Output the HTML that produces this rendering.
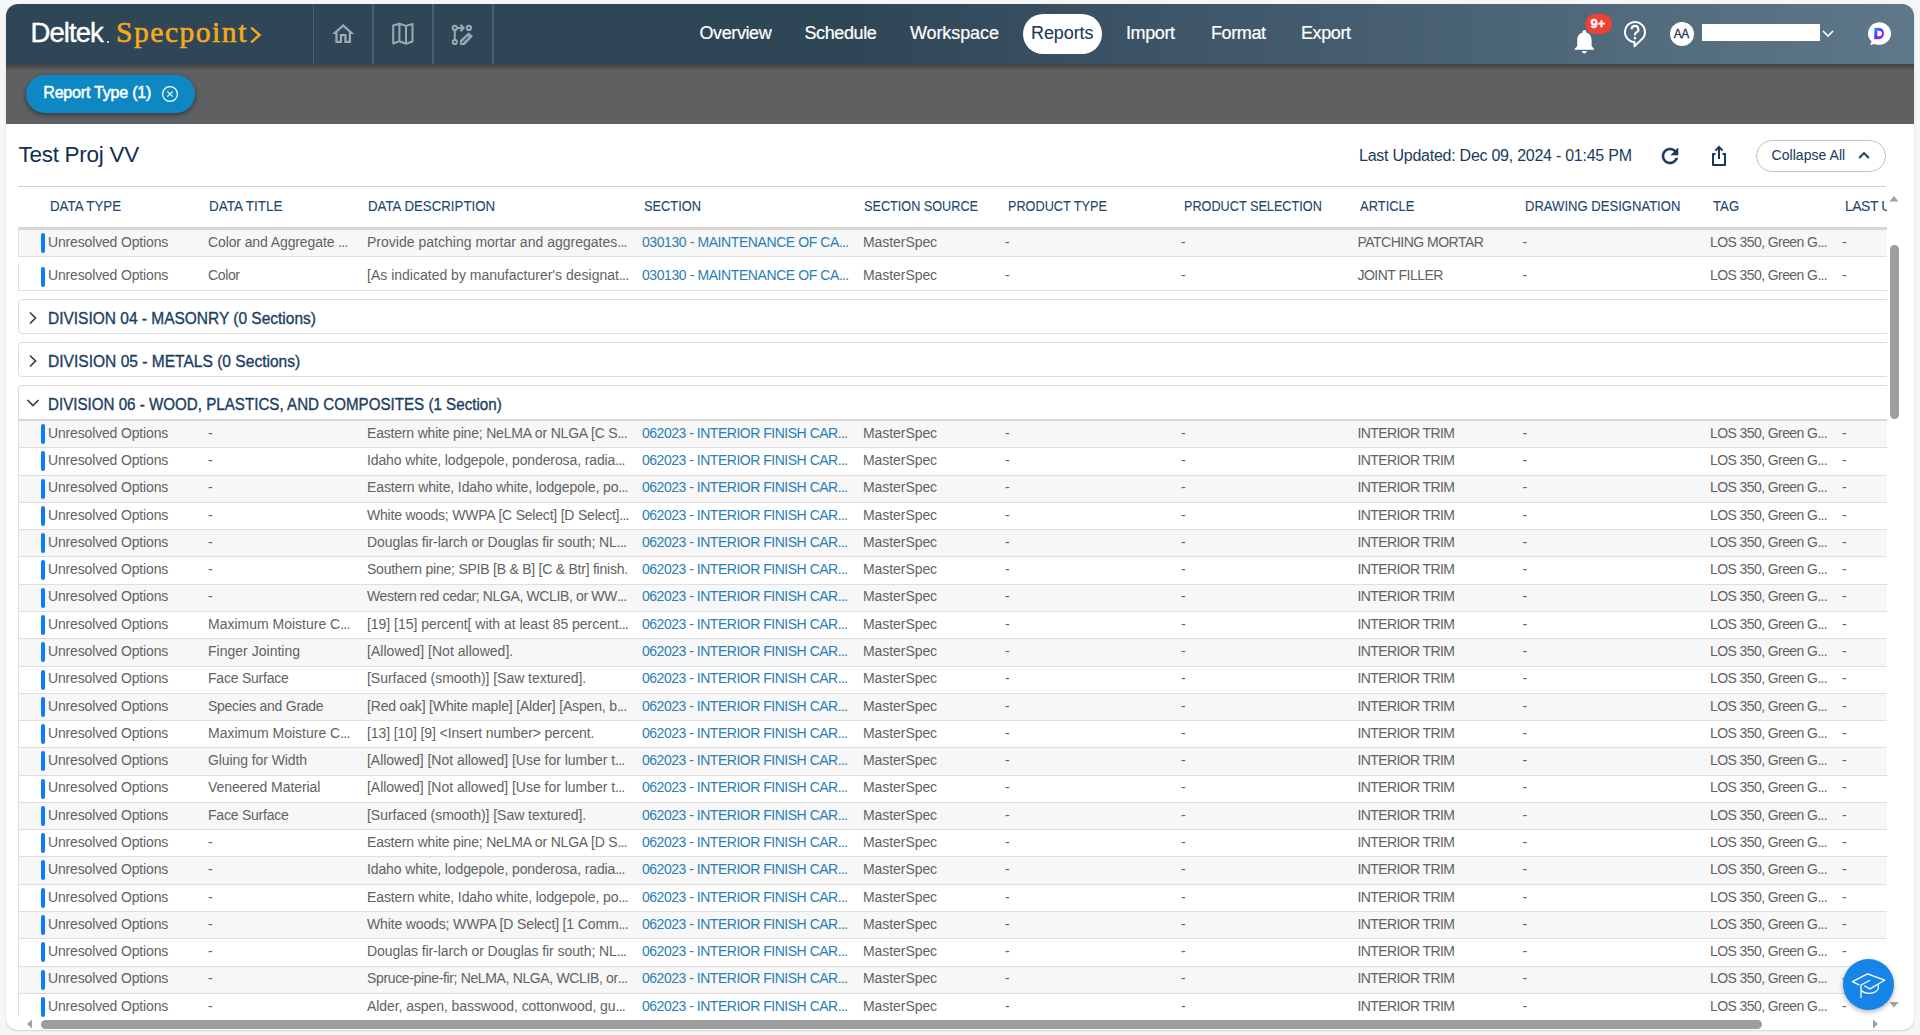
<!DOCTYPE html>
<html><head><meta charset="utf-8"><title>Reports</title>
<style>
html,body{margin:0;padding:0}
body{width:1920px;height:1035px;overflow:hidden;background:#f6f6f6;position:relative;font-family:"Liberation Sans",sans-serif}
.abs{position:absolute}
.t{position:absolute;white-space:nowrap;line-height:1}
#card{position:absolute;left:6px;top:4px;width:1908px;height:1026px;background:#fff;border-radius:12px;box-shadow:0 1px 2px rgba(0,0,0,.13),0 0 1px rgba(0,0,0,.12)}
#hdr{position:absolute;left:6px;top:4px;width:1908px;height:60px;border-radius:12px 12px 0 0;background:linear-gradient(90deg,#2e4656 0px,#2f4657 850px,#5e788a 1908px)}
.sep{position:absolute;top:4px;height:60px;width:1.5px;background:#4a5f70}
#band{position:absolute;left:6px;top:64px;width:1908px;height:60px;background:#5f6062}
#band:before{content:"";position:absolute;left:0;top:0;right:0;height:7px;background:linear-gradient(#3f4042,rgba(95,96,98,0))}
.nav{font-size:18px;color:#fff;-webkit-text-stroke:0.2px #fff}
#pill{position:absolute;left:1023px;top:14px;width:79px;height:40px;border-radius:20px;background:#fff}
#chip{position:absolute;left:26px;top:75px;width:169px;height:38px;border-radius:19px;background:#0e88c2;box-shadow:0 2px 5px rgba(0,0,0,.45)}
.hd{font-size:14px;color:#22466c;-webkit-text-stroke:0.1px #22466c}
.row{position:absolute;left:18px;width:1869px;border-bottom:1px solid #dedede;box-sizing:border-box;border-left:1px solid #dedede;background:#fff}
.row.g{background:#f7f7f7}
.row .bar{position:absolute;left:22px;top:3px;width:4px;height:20px;border-radius:2px;background:#0a7cfc}
.row .c{position:absolute;top:4.75px;font-size:14px;line-height:1;white-space:nowrap;color:#626262;letter-spacing:0px}
.row.r2{border-left-color:transparent}
.row.r2:before{content:'';position:absolute;left:-1px;top:6px;bottom:-1px;width:1px;background:#dedede}
.row.r2 .bar{top:9.8px}
.row.r2 .c{top:11px}
.c1{left:29px}.c2{left:189px}.c3{left:348px}.c4{left:623px}.c5{left:844px}.c6{left:986px}.c7{left:1162px}.c8{left:1338.5px}.c9{left:1503.5px}.c10{left:1691px}.c11{left:1823px}
.row .lk{color:#2a7eb4;letter-spacing:-0.45px}
.row .up{letter-spacing:-0.5px}
.row .c5{letter-spacing:-0.1px}
.row .c10{letter-spacing:-0.25px}
.div{position:absolute;left:18px;width:1890px;height:35px;border:1px solid #dcdcdc;border-radius:4px;box-sizing:border-box;background:#fff}
.dt{font-size:16px;color:#1c3e62;-webkit-text-stroke:0.35px #1c3e62}
.el{font-weight:normal;letter-spacing:-0.75px}

</style></head><body>
<div id="card"></div>
<div id="hdr"></div>
<div class="sep" style="left:312.6px"></div>
<div class="sep" style="left:372.4px"></div>
<div class="sep" style="left:432.4px"></div>
<div class="sep" style="left:492.2px"></div>
<!-- logo -->
<div class="t" style="left:30.6px;top:19.3px;font-size:27.5px;color:#fff;letter-spacing:-0.95px;-webkit-text-stroke:0.4px #fff">Deltek</div>
<div class="abs" style="left:107px;top:40.5px;width:2px;height:2px;background:#c9ced3"></div>
<div class="t" style="left:116px;top:17.7px;font-family:'Liberation Serif',serif;font-size:29.6px;color:#f5a91b;letter-spacing:1.5px;-webkit-text-stroke:0.6px #f5a91b">Specpoint</div>
<svg class="abs" style="left:246.8px;top:24px" width="16" height="20" viewBox="0 0 16 20"><path d="M4.2 3.6 L12.6 11 L4.2 18.4" fill="none" stroke="#f5a91b" stroke-width="2.5"/></svg>
<!-- nav icons -->
<svg class="abs" style="left:331.6px;top:23.6px" width="22.4" height="19.04" viewBox="2 3 20 17"><path d="M12 5.69l5 4.5V18h-2v-6H9v6H7v-7.81l5-4.5M12 3L2 12h3v8h6v-6h2v6h6v-8h3L12 3z" fill="#9aa9b4"/></svg>
<svg class="abs" style="left:385px;top:18px" width="40" height="32" viewBox="385 18 40 32"><path d="M393.2 25.4 L399.4 23.7 L406 25.9 L412.5 23.9 L412.5 41.5 L406 43.7 L399.4 41.3 L393.2 43.5 Z M399.4 23.7 V41.3 M406 25.9 V43.7" fill="none" stroke="#9aa9b4" stroke-width="2" stroke-linejoin="round"/></svg>
<svg class="abs" style="left:445px;top:18px" width="35" height="32" viewBox="445 18 35 32"><g fill="none" stroke="#9aa9b4" stroke-width="2"><circle cx="454.8" cy="27.9" r="2.1"/><circle cx="454.8" cy="42" r="2.1"/><path d="M454.8 30 V39.9"/><path d="M456.9 27.9 H463.5 M460.4 24.6 L463.7 27.9 L460.4 31.2"/><circle cx="468.9" cy="27.9" r="2.1"/></g><path d="M460 45 L460 40.3 L468.7 32.4 L472.9 36.3 L464.5 45 Z" fill="#9aa9b4"/><path d="M462.2 42.6 L467.9 37" stroke="#2f4557" stroke-width="1.3" stroke-linecap="round"/></svg>
<!-- nav text -->
<div class="t nav" style="left:699.5px;top:24.1px;letter-spacing:-0.4px">Overview</div>
<div class="t nav" style="left:804.5px;top:24.1px;letter-spacing:-0.4px">Schedule</div>
<div class="t nav" style="left:910px;top:24.1px;letter-spacing:-0.1px">Workspace</div>
<div id="pill"></div>
<div class="t nav" style="left:1031px;top:24.1px;color:#22395a;letter-spacing:-0.1px;-webkit-text-stroke:0.1px #22395a">Reports</div>
<div class="t nav" style="left:1126px;top:24.1px;letter-spacing:-0.4px">Import</div>
<div class="t nav" style="left:1211px;top:24.1px;letter-spacing:-0.4px">Format</div>
<div class="t nav" style="left:1301px;top:24.1px;letter-spacing:-0.4px">Export</div>
<!-- right icons -->
<svg class="abs" style="left:1570.2px;top:26.8px" width="28.8" height="28.8" viewBox="0 0 24 24"><path d="M12 22c1.1 0 2-.9 2-2h-4c0 1.1.89 2 2 2zm6-6v-5c0-3.07-1.64-5.64-4.5-6.32V4c0-.83-.67-1.5-1.5-1.5s-1.5.67-1.5 1.5v.68C7.63 5.36 6 7.92 6 11v5l-2 2v1h16v-1l-2-2z" fill="#fff"/></svg>
<div class="abs" style="left:1585px;top:14px;width:27px;height:20px;border-radius:10px;background:#ef4237"></div>
<div class="t" style="left:1590.5px;top:17px;font-size:13px;font-weight:bold;color:#fff;letter-spacing:0px;-webkit-text-stroke:0.3px #fff">9+</div>
<svg class="abs" style="left:1622px;top:19px" width="27" height="30" viewBox="0 0 27 30"><path d="M12.5 23 L12.5 27.2 L20.7 19.4 A10 10 0 1 0 12.5 23 Z" fill="none" stroke="#fff" stroke-width="2" stroke-linejoin="round"/><path d="M9.6 10.2 A3.4 3.4 0 1 1 14.3 13.4 C13.2 14 12.9 14.6 12.9 16.4" fill="none" stroke="#fff" stroke-width="2.1"/><rect x="11.8" y="18" width="2.3" height="2.3" fill="#fff"/></svg>
<div class="abs" style="left:1670px;top:22px;width:24px;height:24px;border-radius:12px;background:#fff"></div>
<div class="t" style="left:1673.8px;top:28px;font-size:12px;color:#1f3550;letter-spacing:-0.5px;-webkit-text-stroke:0.3px #1f3550">AA</div>
<div class="abs" style="left:1702px;top:24px;width:118px;height:17px;background:#fff"></div>
<svg class="abs" style="left:1821px;top:28px" width="14" height="12" viewBox="0 0 14 12"><path d="M2 3 L7 8 L12 3" fill="none" stroke="#fff" stroke-width="1.6"/></svg>
<svg class="abs" style="left:1865px;top:20px" width="28" height="28" viewBox="0 0 28 28"><defs><linearGradient id="dg" x1="0" y1="0" x2="1" y2="1"><stop offset="0" stop-color="#18b0ff"/><stop offset="0.45" stop-color="#5a30f8"/><stop offset="1" stop-color="#b41cf8"/></linearGradient></defs><path d="M14 2.2 A11.8 11.3 0 1 1 9.6 23.9 L5 25 L6.6 21.5 A11.8 11.3 0 0 1 14 2.2 Z" fill="#fff"/><path d="M9.3 7.8 H14.2 A5.8 5.8 0 0 1 14.2 19.2 H9.3 Z M12.3 10.7 V16.3 H14.2 A2.8 2.8 0 0 0 14.2 10.7 Z" fill="url(#dg)"/></svg>
<!-- band -->
<div id="band"></div>
<div id="chip"></div>
<div class="t" style="left:43.3px;top:85.1px;font-size:16px;color:#fff;letter-spacing:-0.2px;-webkit-text-stroke:0.5px #fff">Report Type (1)</div>
<svg class="abs" style="left:161px;top:85px" width="18" height="18" viewBox="0 0 18 18"><circle cx="9" cy="9" r="7.4" fill="none" stroke="#fff" stroke-width="1.2"/><path d="M6.3 6.3 L11.7 11.7 M11.7 6.3 L6.3 11.7" stroke="#fff" stroke-width="1.2"/></svg>
<!-- title bar -->
<div class="t" style="left:18.5px;top:144.4px;font-size:22.5px;color:#10304f;letter-spacing:-0.28px">Test Proj VV</div>
<div class="t" style="left:1359px;top:147.6px;font-size:16px;color:#1a3a5c;letter-spacing:-0.25px">Last Updated: Dec 09, 2024 - 01:45 PM</div>
<svg class="abs" style="left:1658px;top:144px" width="24" height="24" viewBox="0 0 24 24"><path d="M17.65 6.35C16.2 4.9 14.21 4 12 4c-4.42 0-7.99 3.58-7.99 8s3.57 8 7.99 8c3.73 0 6.84-2.55 7.73-6h-2.08c-.82 2.33-3.04 4-5.65 4-3.31 0-6-2.69-6-6s2.69-6 6-6c1.66 0 3.14.69 4.22 1.78L13 11h7V4l-2.35 2.35z" fill="#17385a" stroke="#17385a" stroke-width="0.6"/></svg>
<svg class="abs" style="left:1709px;top:145px" width="20" height="22" viewBox="0 0 20 22"><path d="M6.5 9 H4 V20 H16 V9 H13.5" fill="none" stroke="#17385a" stroke-width="2" stroke-linejoin="round"/><path d="M10 14 V3 M6.4 5.6 L10 2 L13.6 5.6" fill="none" stroke="#17385a" stroke-width="2"/></svg>
<div class="abs" style="left:1756px;top:140px;width:130px;height:32px;box-sizing:border-box;border:1px solid #c4c4c4;border-radius:16px"></div>
<div class="t" style="left:1771.5px;top:147.9px;font-size:14px;color:#17385a;letter-spacing:0.05px">Collapse All</div>
<svg class="abs" style="left:1857px;top:150px" width="14" height="10" viewBox="0 0 14 10"><path d="M2.2 8 L7 3.2 L11.8 8" fill="none" stroke="#17385a" stroke-width="1.9"/></svg>
<!-- table header -->
<div class="abs" style="left:18px;top:186px;width:1868px;height:1px;background:#d0d0d0"></div>
<div id="ch1" class="t hd" style="left:49.5px;top:199px;transform:scaleX(0.9517);transform-origin:0 0;">DATA TYPE</div>
<div id="ch2" class="t hd" style="left:209px;top:199px;transform:scaleX(0.9632);transform-origin:0 0;">DATA TITLE</div>
<div id="ch3" class="t hd" style="left:368px;top:199px;transform:scaleX(0.9481);transform-origin:0 0;">DATA DESCRIPTION</div>
<div id="ch4" class="t hd" style="left:644px;top:199px;transform:scaleX(0.9162);transform-origin:0 0;">SECTION</div>
<div id="ch5" class="t hd" style="left:864px;top:199px;transform:scaleX(0.9048);transform-origin:0 0;">SECTION SOURCE</div>
<div id="ch6" class="t hd" style="left:1007.5px;top:199px;transform:scaleX(0.9055);transform-origin:0 0;">PRODUCT TYPE</div>
<div id="ch7" class="t hd" style="left:1184px;top:199px;transform:scaleX(0.9052);transform-origin:0 0;">PRODUCT SELECTION</div>
<div id="ch8" class="t hd" style="left:1360px;top:199px;transform:scaleX(0.9238);transform-origin:0 0;">ARTICLE</div>
<div id="ch9" class="t hd" style="left:1525px;top:199px;transform:scaleX(0.9333);transform-origin:0 0;">DRAWING DESIGNATION</div>
<div id="ch10" class="t hd" style="left:1712.5px;top:199px;transform:scaleX(0.9424);transform-origin:0 0;">TAG</div>
<div class="abs" style="left:1845px;top:199px;width:42px;height:16px;overflow:hidden"><div class="t hd" style="left:0;top:0;letter-spacing:-0.5px">LAST UPDATED</div></div>
<!-- rows area -->
<div class="abs" style="left:0;top:187px;width:1887px;height:830px;overflow:hidden">
<div class="abs" style="left:0;top:-187px;width:1887px;height:1035px">
<div class="row g" style="top:230px;height:27px"><i class="bar"></i><span id="ca_1" class="c c1" style="letter-spacing:-0.156px">Unresolved Options</span><span id="ca_2" class="c c2" style="letter-spacing:-0.109px">Color and Aggregate <b class="el">...</b></span><span id="ca_3" class="c c3" style="letter-spacing:0.013px">Provide patching mortar and aggregates<b class="el">...</b></span><span id="ca_4" class="c c4 lk" style="letter-spacing:-0.414px">030130 - MAINTENANCE OF CA<b class="el">...</b></span><span id="ca_5" class="c c5" style="letter-spacing:-0.064px">MasterSpec</span><span id="ca_6" class="c c6">-</span><span id="ca_7" class="c c7">-</span><span id="ca_8" class="c c8 up" style="letter-spacing:-0.515px">PATCHING MORTAR</span><span id="ca_9" class="c c9">-</span><span id="ca_10" class="c c10" style="letter-spacing:-0.584px">LOS 350, Green G<b class="el">...</b></span><span id="ca_11" class="c c11">-</span></div>
<div class="row r2" style="top:257px;height:34px"><i class="bar"></i><span id="cb_1" class="c c1" style="letter-spacing:-0.156px">Unresolved Options</span><span id="cb_2" class="c c2" style="letter-spacing:-0.375px">Color</span><span id="cb_3" class="c c3" style="letter-spacing:0.005px">[As indicated by manufacturer's designat<b class="el">...</b></span><span id="cb_4" class="c c4 lk" style="letter-spacing:-0.414px">030130 - MAINTENANCE OF CA<b class="el">...</b></span><span id="cb_5" class="c c5" style="letter-spacing:-0.064px">MasterSpec</span><span id="cb_6" class="c c6">-</span><span id="cb_7" class="c c7">-</span><span id="cb_8" class="c c8 up" style="letter-spacing:-0.510px">JOINT FILLER</span><span id="cb_9" class="c c9">-</span><span id="cb_10" class="c c10" style="letter-spacing:-0.584px">LOS 350, Green G<b class="el">...</b></span><span id="cb_11" class="c c11">-</span></div>
<div class="row g d6" style="top:421.0px;height:27.28px"><i class="bar"></i><span id="c0_1" class="c c1" style="letter-spacing:-0.156px">Unresolved Options</span><span id="c0_2" class="c c2">-</span><span id="c0_3" class="c c3" style="letter-spacing:-0.188px">Eastern white pine; NeLMA or NLGA [C S<b class="el">...</b></span><span id="c0_4" class="c c4 lk" style="letter-spacing:-0.483px">062023 - INTERIOR FINISH CAR<b class="el">...</b></span><span id="c0_5" class="c c5" style="letter-spacing:-0.064px">MasterSpec</span><span id="c0_6" class="c c6">-</span><span id="c0_7" class="c c7">-</span><span id="c0_8" class="c c8 up" style="letter-spacing:-0.608px">INTERIOR TRIM</span><span id="c0_9" class="c c9">-</span><span id="c0_10" class="c c10" style="letter-spacing:-0.584px">LOS 350, Green G<b class="el">...</b></span><span id="c0_11" class="c c11">-</span></div>
<div class="row d6" style="top:448.28px;height:27.28px"><i class="bar"></i><span id="c1_1" class="c c1" style="letter-spacing:-0.156px">Unresolved Options</span><span id="c1_2" class="c c2">-</span><span id="c1_3" class="c c3" style="letter-spacing:-0.119px">Idaho white, lodgepole, ponderosa, radia<b class="el">...</b></span><span id="c1_4" class="c c4 lk" style="letter-spacing:-0.483px">062023 - INTERIOR FINISH CAR<b class="el">...</b></span><span id="c1_5" class="c c5" style="letter-spacing:-0.064px">MasterSpec</span><span id="c1_6" class="c c6">-</span><span id="c1_7" class="c c7">-</span><span id="c1_8" class="c c8 up" style="letter-spacing:-0.608px">INTERIOR TRIM</span><span id="c1_9" class="c c9">-</span><span id="c1_10" class="c c10" style="letter-spacing:-0.584px">LOS 350, Green G<b class="el">...</b></span><span id="c1_11" class="c c11">-</span></div>
<div class="row g d6" style="top:475.56px;height:27.28px"><i class="bar"></i><span id="c2_1" class="c c1" style="letter-spacing:-0.156px">Unresolved Options</span><span id="c2_2" class="c c2">-</span><span id="c2_3" class="c c3" style="letter-spacing:-0.116px">Eastern white, Idaho white, lodgepole, po<b class="el">...</b></span><span id="c2_4" class="c c4 lk" style="letter-spacing:-0.483px">062023 - INTERIOR FINISH CAR<b class="el">...</b></span><span id="c2_5" class="c c5" style="letter-spacing:-0.064px">MasterSpec</span><span id="c2_6" class="c c6">-</span><span id="c2_7" class="c c7">-</span><span id="c2_8" class="c c8 up" style="letter-spacing:-0.608px">INTERIOR TRIM</span><span id="c2_9" class="c c9">-</span><span id="c2_10" class="c c10" style="letter-spacing:-0.584px">LOS 350, Green G<b class="el">...</b></span><span id="c2_11" class="c c11">-</span></div>
<div class="row d6" style="top:502.84px;height:27.28px"><i class="bar"></i><span id="c3_1" class="c c1" style="letter-spacing:-0.156px">Unresolved Options</span><span id="c3_2" class="c c2">-</span><span id="c3_3" class="c c3" style="letter-spacing:-0.207px">White woods; WWPA [C Select] [D Select]<b class="el">...</b></span><span id="c3_4" class="c c4 lk" style="letter-spacing:-0.483px">062023 - INTERIOR FINISH CAR<b class="el">...</b></span><span id="c3_5" class="c c5" style="letter-spacing:-0.064px">MasterSpec</span><span id="c3_6" class="c c6">-</span><span id="c3_7" class="c c7">-</span><span id="c3_8" class="c c8 up" style="letter-spacing:-0.608px">INTERIOR TRIM</span><span id="c3_9" class="c c9">-</span><span id="c3_10" class="c c10" style="letter-spacing:-0.584px">LOS 350, Green G<b class="el">...</b></span><span id="c3_11" class="c c11">-</span></div>
<div class="row g d6" style="top:530.12px;height:27.28px"><i class="bar"></i><span id="c4_1" class="c c1" style="letter-spacing:-0.156px">Unresolved Options</span><span id="c4_2" class="c c2">-</span><span id="c4_3" class="c c3" style="letter-spacing:-0.074px">Douglas fir-larch or Douglas fir south; NL<b class="el">...</b></span><span id="c4_4" class="c c4 lk" style="letter-spacing:-0.483px">062023 - INTERIOR FINISH CAR<b class="el">...</b></span><span id="c4_5" class="c c5" style="letter-spacing:-0.064px">MasterSpec</span><span id="c4_6" class="c c6">-</span><span id="c4_7" class="c c7">-</span><span id="c4_8" class="c c8 up" style="letter-spacing:-0.608px">INTERIOR TRIM</span><span id="c4_9" class="c c9">-</span><span id="c4_10" class="c c10" style="letter-spacing:-0.584px">LOS 350, Green G<b class="el">...</b></span><span id="c4_11" class="c c11">-</span></div>
<div class="row d6" style="top:557.4px;height:27.28px"><i class="bar"></i><span id="c5_1" class="c c1" style="letter-spacing:-0.156px">Unresolved Options</span><span id="c5_2" class="c c2">-</span><span id="c5_3" class="c c3" style="letter-spacing:-0.238px">Southern pine; SPIB [B &amp; B] [C &amp; Btr] finish.</span><span id="c5_4" class="c c4 lk" style="letter-spacing:-0.483px">062023 - INTERIOR FINISH CAR<b class="el">...</b></span><span id="c5_5" class="c c5" style="letter-spacing:-0.064px">MasterSpec</span><span id="c5_6" class="c c6">-</span><span id="c5_7" class="c c7">-</span><span id="c5_8" class="c c8 up" style="letter-spacing:-0.608px">INTERIOR TRIM</span><span id="c5_9" class="c c9">-</span><span id="c5_10" class="c c10" style="letter-spacing:-0.584px">LOS 350, Green G<b class="el">...</b></span><span id="c5_11" class="c c11">-</span></div>
<div class="row g d6" style="top:584.68px;height:27.28px"><i class="bar"></i><span id="c6_1" class="c c1" style="letter-spacing:-0.156px">Unresolved Options</span><span id="c6_2" class="c c2">-</span><span id="c6_3" class="c c3" style="letter-spacing:-0.365px">Western red cedar; NLGA, WCLIB, or WW<b class="el">...</b></span><span id="c6_4" class="c c4 lk" style="letter-spacing:-0.483px">062023 - INTERIOR FINISH CAR<b class="el">...</b></span><span id="c6_5" class="c c5" style="letter-spacing:-0.064px">MasterSpec</span><span id="c6_6" class="c c6">-</span><span id="c6_7" class="c c7">-</span><span id="c6_8" class="c c8 up" style="letter-spacing:-0.608px">INTERIOR TRIM</span><span id="c6_9" class="c c9">-</span><span id="c6_10" class="c c10" style="letter-spacing:-0.584px">LOS 350, Green G<b class="el">...</b></span><span id="c6_11" class="c c11">-</span></div>
<div class="row d6" style="top:611.96px;height:27.28px"><i class="bar"></i><span id="c7_1" class="c c1" style="letter-spacing:-0.156px">Unresolved Options</span><span id="c7_2" class="c c2" style="letter-spacing:-0.005px">Maximum Moisture C<b class="el">...</b></span><span id="c7_3" class="c c3" style="letter-spacing:-0.033px">[19] [15] percent[ with at least 85 percent<b class="el">...</b></span><span id="c7_4" class="c c4 lk" style="letter-spacing:-0.483px">062023 - INTERIOR FINISH CAR<b class="el">...</b></span><span id="c7_5" class="c c5" style="letter-spacing:-0.064px">MasterSpec</span><span id="c7_6" class="c c6">-</span><span id="c7_7" class="c c7">-</span><span id="c7_8" class="c c8 up" style="letter-spacing:-0.608px">INTERIOR TRIM</span><span id="c7_9" class="c c9">-</span><span id="c7_10" class="c c10" style="letter-spacing:-0.584px">LOS 350, Green G<b class="el">...</b></span><span id="c7_11" class="c c11">-</span></div>
<div class="row g d6" style="top:639.24px;height:27.28px"><i class="bar"></i><span id="c8_1" class="c c1" style="letter-spacing:-0.156px">Unresolved Options</span><span id="c8_2" class="c c2" style="letter-spacing:0.016px">Finger Jointing</span><span id="c8_3" class="c c3" style="letter-spacing:0.031px">[Allowed] [Not allowed].</span><span id="c8_4" class="c c4 lk" style="letter-spacing:-0.483px">062023 - INTERIOR FINISH CAR<b class="el">...</b></span><span id="c8_5" class="c c5" style="letter-spacing:-0.064px">MasterSpec</span><span id="c8_6" class="c c6">-</span><span id="c8_7" class="c c7">-</span><span id="c8_8" class="c c8 up" style="letter-spacing:-0.608px">INTERIOR TRIM</span><span id="c8_9" class="c c9">-</span><span id="c8_10" class="c c10" style="letter-spacing:-0.584px">LOS 350, Green G<b class="el">...</b></span><span id="c8_11" class="c c11">-</span></div>
<div class="row d6" style="top:666.52px;height:27.28px"><i class="bar"></i><span id="c9_1" class="c c1" style="letter-spacing:-0.156px">Unresolved Options</span><span id="c9_2" class="c c2" style="letter-spacing:-0.227px">Face Surface</span><span id="c9_3" class="c c3" style="letter-spacing:-0.029px">[Surfaced (smooth)] [Saw textured].</span><span id="c9_4" class="c c4 lk" style="letter-spacing:-0.483px">062023 - INTERIOR FINISH CAR<b class="el">...</b></span><span id="c9_5" class="c c5" style="letter-spacing:-0.064px">MasterSpec</span><span id="c9_6" class="c c6">-</span><span id="c9_7" class="c c7">-</span><span id="c9_8" class="c c8 up" style="letter-spacing:-0.608px">INTERIOR TRIM</span><span id="c9_9" class="c c9">-</span><span id="c9_10" class="c c10" style="letter-spacing:-0.584px">LOS 350, Green G<b class="el">...</b></span><span id="c9_11" class="c c11">-</span></div>
<div class="row g d6" style="top:693.8px;height:27.28px"><i class="bar"></i><span id="c10_1" class="c c1" style="letter-spacing:-0.156px">Unresolved Options</span><span id="c10_2" class="c c2" style="letter-spacing:-0.266px">Species and Grade</span><span id="c10_3" class="c c3" style="letter-spacing:-0.169px">[Red oak] [White maple] [Alder] [Aspen, b<b class="el">...</b></span><span id="c10_4" class="c c4 lk" style="letter-spacing:-0.483px">062023 - INTERIOR FINISH CAR<b class="el">...</b></span><span id="c10_5" class="c c5" style="letter-spacing:-0.064px">MasterSpec</span><span id="c10_6" class="c c6">-</span><span id="c10_7" class="c c7">-</span><span id="c10_8" class="c c8 up" style="letter-spacing:-0.608px">INTERIOR TRIM</span><span id="c10_9" class="c c9">-</span><span id="c10_10" class="c c10" style="letter-spacing:-0.584px">LOS 350, Green G<b class="el">...</b></span><span id="c10_11" class="c c11">-</span></div>
<div class="row d6" style="top:721.08px;height:27.28px"><i class="bar"></i><span id="c11_1" class="c c1" style="letter-spacing:-0.156px">Unresolved Options</span><span id="c11_2" class="c c2" style="letter-spacing:-0.005px">Maximum Moisture C<b class="el">...</b></span><span id="c11_3" class="c c3" style="letter-spacing:-0.099px">[13] [10] [9] &lt;Insert number&gt; percent.</span><span id="c11_4" class="c c4 lk" style="letter-spacing:-0.483px">062023 - INTERIOR FINISH CAR<b class="el">...</b></span><span id="c11_5" class="c c5" style="letter-spacing:-0.064px">MasterSpec</span><span id="c11_6" class="c c6">-</span><span id="c11_7" class="c c7">-</span><span id="c11_8" class="c c8 up" style="letter-spacing:-0.608px">INTERIOR TRIM</span><span id="c11_9" class="c c9">-</span><span id="c11_10" class="c c10" style="letter-spacing:-0.584px">LOS 350, Green G<b class="el">...</b></span><span id="c11_11" class="c c11">-</span></div>
<div class="row g d6" style="top:748.36px;height:27.28px"><i class="bar"></i><span id="c12_1" class="c c1" style="letter-spacing:-0.156px">Unresolved Options</span><span id="c12_2" class="c c2" style="letter-spacing:-0.081px">Gluing for Width</span><span id="c12_3" class="c c3" style="letter-spacing:-0.023px">[Allowed] [Not allowed] [Use for lumber t<b class="el">...</b></span><span id="c12_4" class="c c4 lk" style="letter-spacing:-0.483px">062023 - INTERIOR FINISH CAR<b class="el">...</b></span><span id="c12_5" class="c c5" style="letter-spacing:-0.064px">MasterSpec</span><span id="c12_6" class="c c6">-</span><span id="c12_7" class="c c7">-</span><span id="c12_8" class="c c8 up" style="letter-spacing:-0.608px">INTERIOR TRIM</span><span id="c12_9" class="c c9">-</span><span id="c12_10" class="c c10" style="letter-spacing:-0.584px">LOS 350, Green G<b class="el">...</b></span><span id="c12_11" class="c c11">-</span></div>
<div class="row d6" style="top:775.64px;height:27.28px"><i class="bar"></i><span id="c13_1" class="c c1" style="letter-spacing:-0.156px">Unresolved Options</span><span id="c13_2" class="c c2" style="letter-spacing:-0.081px">Veneered Material</span><span id="c13_3" class="c c3" style="letter-spacing:-0.023px">[Allowed] [Not allowed] [Use for lumber t<b class="el">...</b></span><span id="c13_4" class="c c4 lk" style="letter-spacing:-0.483px">062023 - INTERIOR FINISH CAR<b class="el">...</b></span><span id="c13_5" class="c c5" style="letter-spacing:-0.064px">MasterSpec</span><span id="c13_6" class="c c6">-</span><span id="c13_7" class="c c7">-</span><span id="c13_8" class="c c8 up" style="letter-spacing:-0.608px">INTERIOR TRIM</span><span id="c13_9" class="c c9">-</span><span id="c13_10" class="c c10" style="letter-spacing:-0.584px">LOS 350, Green G<b class="el">...</b></span><span id="c13_11" class="c c11">-</span></div>
<div class="row g d6" style="top:802.92px;height:27.28px"><i class="bar"></i><span id="c14_1" class="c c1" style="letter-spacing:-0.156px">Unresolved Options</span><span id="c14_2" class="c c2" style="letter-spacing:-0.227px">Face Surface</span><span id="c14_3" class="c c3" style="letter-spacing:-0.029px">[Surfaced (smooth)] [Saw textured].</span><span id="c14_4" class="c c4 lk" style="letter-spacing:-0.483px">062023 - INTERIOR FINISH CAR<b class="el">...</b></span><span id="c14_5" class="c c5" style="letter-spacing:-0.064px">MasterSpec</span><span id="c14_6" class="c c6">-</span><span id="c14_7" class="c c7">-</span><span id="c14_8" class="c c8 up" style="letter-spacing:-0.608px">INTERIOR TRIM</span><span id="c14_9" class="c c9">-</span><span id="c14_10" class="c c10" style="letter-spacing:-0.584px">LOS 350, Green G<b class="el">...</b></span><span id="c14_11" class="c c11">-</span></div>
<div class="row d6" style="top:830.2px;height:27.28px"><i class="bar"></i><span id="c15_1" class="c c1" style="letter-spacing:-0.156px">Unresolved Options</span><span id="c15_2" class="c c2">-</span><span id="c15_3" class="c c3" style="letter-spacing:-0.188px">Eastern white pine; NeLMA or NLGA [D S<b class="el">...</b></span><span id="c15_4" class="c c4 lk" style="letter-spacing:-0.483px">062023 - INTERIOR FINISH CAR<b class="el">...</b></span><span id="c15_5" class="c c5" style="letter-spacing:-0.064px">MasterSpec</span><span id="c15_6" class="c c6">-</span><span id="c15_7" class="c c7">-</span><span id="c15_8" class="c c8 up" style="letter-spacing:-0.608px">INTERIOR TRIM</span><span id="c15_9" class="c c9">-</span><span id="c15_10" class="c c10" style="letter-spacing:-0.584px">LOS 350, Green G<b class="el">...</b></span><span id="c15_11" class="c c11">-</span></div>
<div class="row g d6" style="top:857.48px;height:27.28px"><i class="bar"></i><span id="c16_1" class="c c1" style="letter-spacing:-0.156px">Unresolved Options</span><span id="c16_2" class="c c2">-</span><span id="c16_3" class="c c3" style="letter-spacing:-0.119px">Idaho white, lodgepole, ponderosa, radia<b class="el">...</b></span><span id="c16_4" class="c c4 lk" style="letter-spacing:-0.483px">062023 - INTERIOR FINISH CAR<b class="el">...</b></span><span id="c16_5" class="c c5" style="letter-spacing:-0.064px">MasterSpec</span><span id="c16_6" class="c c6">-</span><span id="c16_7" class="c c7">-</span><span id="c16_8" class="c c8 up" style="letter-spacing:-0.608px">INTERIOR TRIM</span><span id="c16_9" class="c c9">-</span><span id="c16_10" class="c c10" style="letter-spacing:-0.584px">LOS 350, Green G<b class="el">...</b></span><span id="c16_11" class="c c11">-</span></div>
<div class="row d6" style="top:884.76px;height:27.28px"><i class="bar"></i><span id="c17_1" class="c c1" style="letter-spacing:-0.156px">Unresolved Options</span><span id="c17_2" class="c c2">-</span><span id="c17_3" class="c c3" style="letter-spacing:-0.116px">Eastern white, Idaho white, lodgepole, po<b class="el">...</b></span><span id="c17_4" class="c c4 lk" style="letter-spacing:-0.483px">062023 - INTERIOR FINISH CAR<b class="el">...</b></span><span id="c17_5" class="c c5" style="letter-spacing:-0.064px">MasterSpec</span><span id="c17_6" class="c c6">-</span><span id="c17_7" class="c c7">-</span><span id="c17_8" class="c c8 up" style="letter-spacing:-0.608px">INTERIOR TRIM</span><span id="c17_9" class="c c9">-</span><span id="c17_10" class="c c10" style="letter-spacing:-0.584px">LOS 350, Green G<b class="el">...</b></span><span id="c17_11" class="c c11">-</span></div>
<div class="row g d6" style="top:912.04px;height:27.28px"><i class="bar"></i><span id="c18_1" class="c c1" style="letter-spacing:-0.156px">Unresolved Options</span><span id="c18_2" class="c c2">-</span><span id="c18_3" class="c c3" style="letter-spacing:-0.140px">White woods; WWPA [D Select] [1 Comm<b class="el">...</b></span><span id="c18_4" class="c c4 lk" style="letter-spacing:-0.483px">062023 - INTERIOR FINISH CAR<b class="el">...</b></span><span id="c18_5" class="c c5" style="letter-spacing:-0.064px">MasterSpec</span><span id="c18_6" class="c c6">-</span><span id="c18_7" class="c c7">-</span><span id="c18_8" class="c c8 up" style="letter-spacing:-0.608px">INTERIOR TRIM</span><span id="c18_9" class="c c9">-</span><span id="c18_10" class="c c10" style="letter-spacing:-0.584px">LOS 350, Green G<b class="el">...</b></span><span id="c18_11" class="c c11">-</span></div>
<div class="row d6" style="top:939.32px;height:27.28px"><i class="bar"></i><span id="c19_1" class="c c1" style="letter-spacing:-0.156px">Unresolved Options</span><span id="c19_2" class="c c2">-</span><span id="c19_3" class="c c3" style="letter-spacing:-0.074px">Douglas fir-larch or Douglas fir south; NL<b class="el">...</b></span><span id="c19_4" class="c c4 lk" style="letter-spacing:-0.483px">062023 - INTERIOR FINISH CAR<b class="el">...</b></span><span id="c19_5" class="c c5" style="letter-spacing:-0.064px">MasterSpec</span><span id="c19_6" class="c c6">-</span><span id="c19_7" class="c c7">-</span><span id="c19_8" class="c c8 up" style="letter-spacing:-0.608px">INTERIOR TRIM</span><span id="c19_9" class="c c9">-</span><span id="c19_10" class="c c10" style="letter-spacing:-0.584px">LOS 350, Green G<b class="el">...</b></span><span id="c19_11" class="c c11">-</span></div>
<div class="row g d6" style="top:966.6px;height:27.28px"><i class="bar"></i><span id="c20_1" class="c c1" style="letter-spacing:-0.156px">Unresolved Options</span><span id="c20_2" class="c c2">-</span><span id="c20_3" class="c c3" style="letter-spacing:-0.351px">Spruce-pine-fir; NeLMA, NLGA, WCLIB, or<b class="el">...</b></span><span id="c20_4" class="c c4 lk" style="letter-spacing:-0.483px">062023 - INTERIOR FINISH CAR<b class="el">...</b></span><span id="c20_5" class="c c5" style="letter-spacing:-0.064px">MasterSpec</span><span id="c20_6" class="c c6">-</span><span id="c20_7" class="c c7">-</span><span id="c20_8" class="c c8 up" style="letter-spacing:-0.608px">INTERIOR TRIM</span><span id="c20_9" class="c c9">-</span><span id="c20_10" class="c c10" style="letter-spacing:-0.584px">LOS 350, Green G<b class="el">...</b></span><span id="c20_11" class="c c11">-</span></div>
<div class="row d6" style="top:993.88px;height:27.28px"><i class="bar"></i><span id="c21_1" class="c c1" style="letter-spacing:-0.156px">Unresolved Options</span><span id="c21_2" class="c c2">-</span><span id="c21_3" class="c c3" style="letter-spacing:-0.075px">Alder, aspen, basswood, cottonwood, gu<b class="el">...</b></span><span id="c21_4" class="c c4 lk" style="letter-spacing:-0.483px">062023 - INTERIOR FINISH CAR<b class="el">...</b></span><span id="c21_5" class="c c5" style="letter-spacing:-0.064px">MasterSpec</span><span id="c21_6" class="c c6">-</span><span id="c21_7" class="c c7">-</span><span id="c21_8" class="c c8 up" style="letter-spacing:-0.608px">INTERIOR TRIM</span><span id="c21_9" class="c c9">-</span><span id="c21_10" class="c c10" style="letter-spacing:-0.584px">LOS 350, Green G<b class="el">...</b></span><span id="c21_11" class="c c11">-</span></div>
<div class="div" style="top:299px"></div>
<div class="div" style="top:342px"></div>
<div class="div" style="top:385px;height:36px;border-bottom:2px solid #d8d8d8;border-radius:4px 4px 0 0"></div>
</div>
</div>
<div class="abs" style="left:18px;top:227px;width:1869px;height:3px;background:#d6d6d6"></div>
<svg class="abs" style="left:28px;top:311px" width="10" height="14" viewBox="0 0 10 14"><path d="M2 1.5 L7.5 7 L2 12.5" fill="none" stroke="#3c3c3c" stroke-width="1.7"/></svg>
<div id="cd4" class="t dt" style="left:48px;top:310.5px;transform:scaleX(0.9677);transform-origin:0 0;">DIVISION 04 - MASONRY (0 Sections)</div>
<svg class="abs" style="left:28px;top:354px" width="10" height="14" viewBox="0 0 10 14"><path d="M2 1.5 L7.5 7 L2 12.5" fill="none" stroke="#3c3c3c" stroke-width="1.7"/></svg>
<div id="cd5" class="t dt" style="left:48px;top:353.5px;transform:scaleX(0.9725);transform-origin:0 0;">DIVISION 05 - METALS (0 Sections)</div>
<svg class="abs" style="left:26px;top:398px" width="14" height="10" viewBox="0 0 14 10"><path d="M1.5 2 L7 7.5 L12.5 2" fill="none" stroke="#3c3c3c" stroke-width="1.7"/></svg>
<div id="cd6" class="t dt" style="left:48px;top:396.5px;transform:scaleX(0.9467);transform-origin:0 0;">DIVISION 06 - WOOD, PLASTICS, AND COMPOSITES (1 Section)</div>
<!-- scrollbars -->
<svg class="abs" style="left:1888px;top:194px" width="12" height="9" viewBox="0 0 12 9"><path d="M1.5 7.5 L6 2 L10.5 7.5 Z" fill="#a0a0a0"/></svg>
<div class="abs" style="left:1890px;top:245px;width:9px;height:174px;border-radius:4.5px;background:#9e9e9e"></div>
<svg class="abs" style="left:1888px;top:1000px" width="12" height="9" viewBox="0 0 12 9"><path d="M1.5 2 L6 7.5 L10.5 2 Z" fill="#a0a0a0"/></svg>
<svg class="abs" style="left:25px;top:1018px" width="9" height="12" viewBox="0 0 9 12"><path d="M7 1.5 L2 6 L7 10.5 Z" fill="#a0a0a0"/></svg>
<div class="abs" style="left:41px;top:1020px;width:1721px;height:9px;border-radius:4.5px;background:#9e9e9e"></div>
<svg class="abs" style="left:1871px;top:1018px" width="9" height="12" viewBox="0 0 9 12"><path d="M2 1.5 L7 6 L2 10.5 Z" fill="#a0a0a0"/></svg>
<!-- fab -->
<div class="abs" style="left:1843px;top:959px;width:51px;height:51px;border-radius:50%;background:#1784e8;box-shadow:0 2px 5px rgba(0,0,0,.3)"></div>
<svg class="abs" style="left:1843px;top:959px" width="51" height="51" viewBox="1843 959 51 51"><g fill="none" stroke="#fff" stroke-width="1.3" stroke-linejoin="round" stroke-linecap="round"><path d="M1859 984.8 L1852.5 981.7 L1867.5 973.8 L1884.6 980.2 L1870.1 988.9 L1864.5 986"/><path d="M1869.6 980.5 L1861 985 L1861 997.6"/><path d="M1878.3 984.5 V988 C1878.3 991 1874 993.3 1869.5 993.3 C1866 993.3 1863 992.3 1861 990.5"/></g></svg>

</body></html>
